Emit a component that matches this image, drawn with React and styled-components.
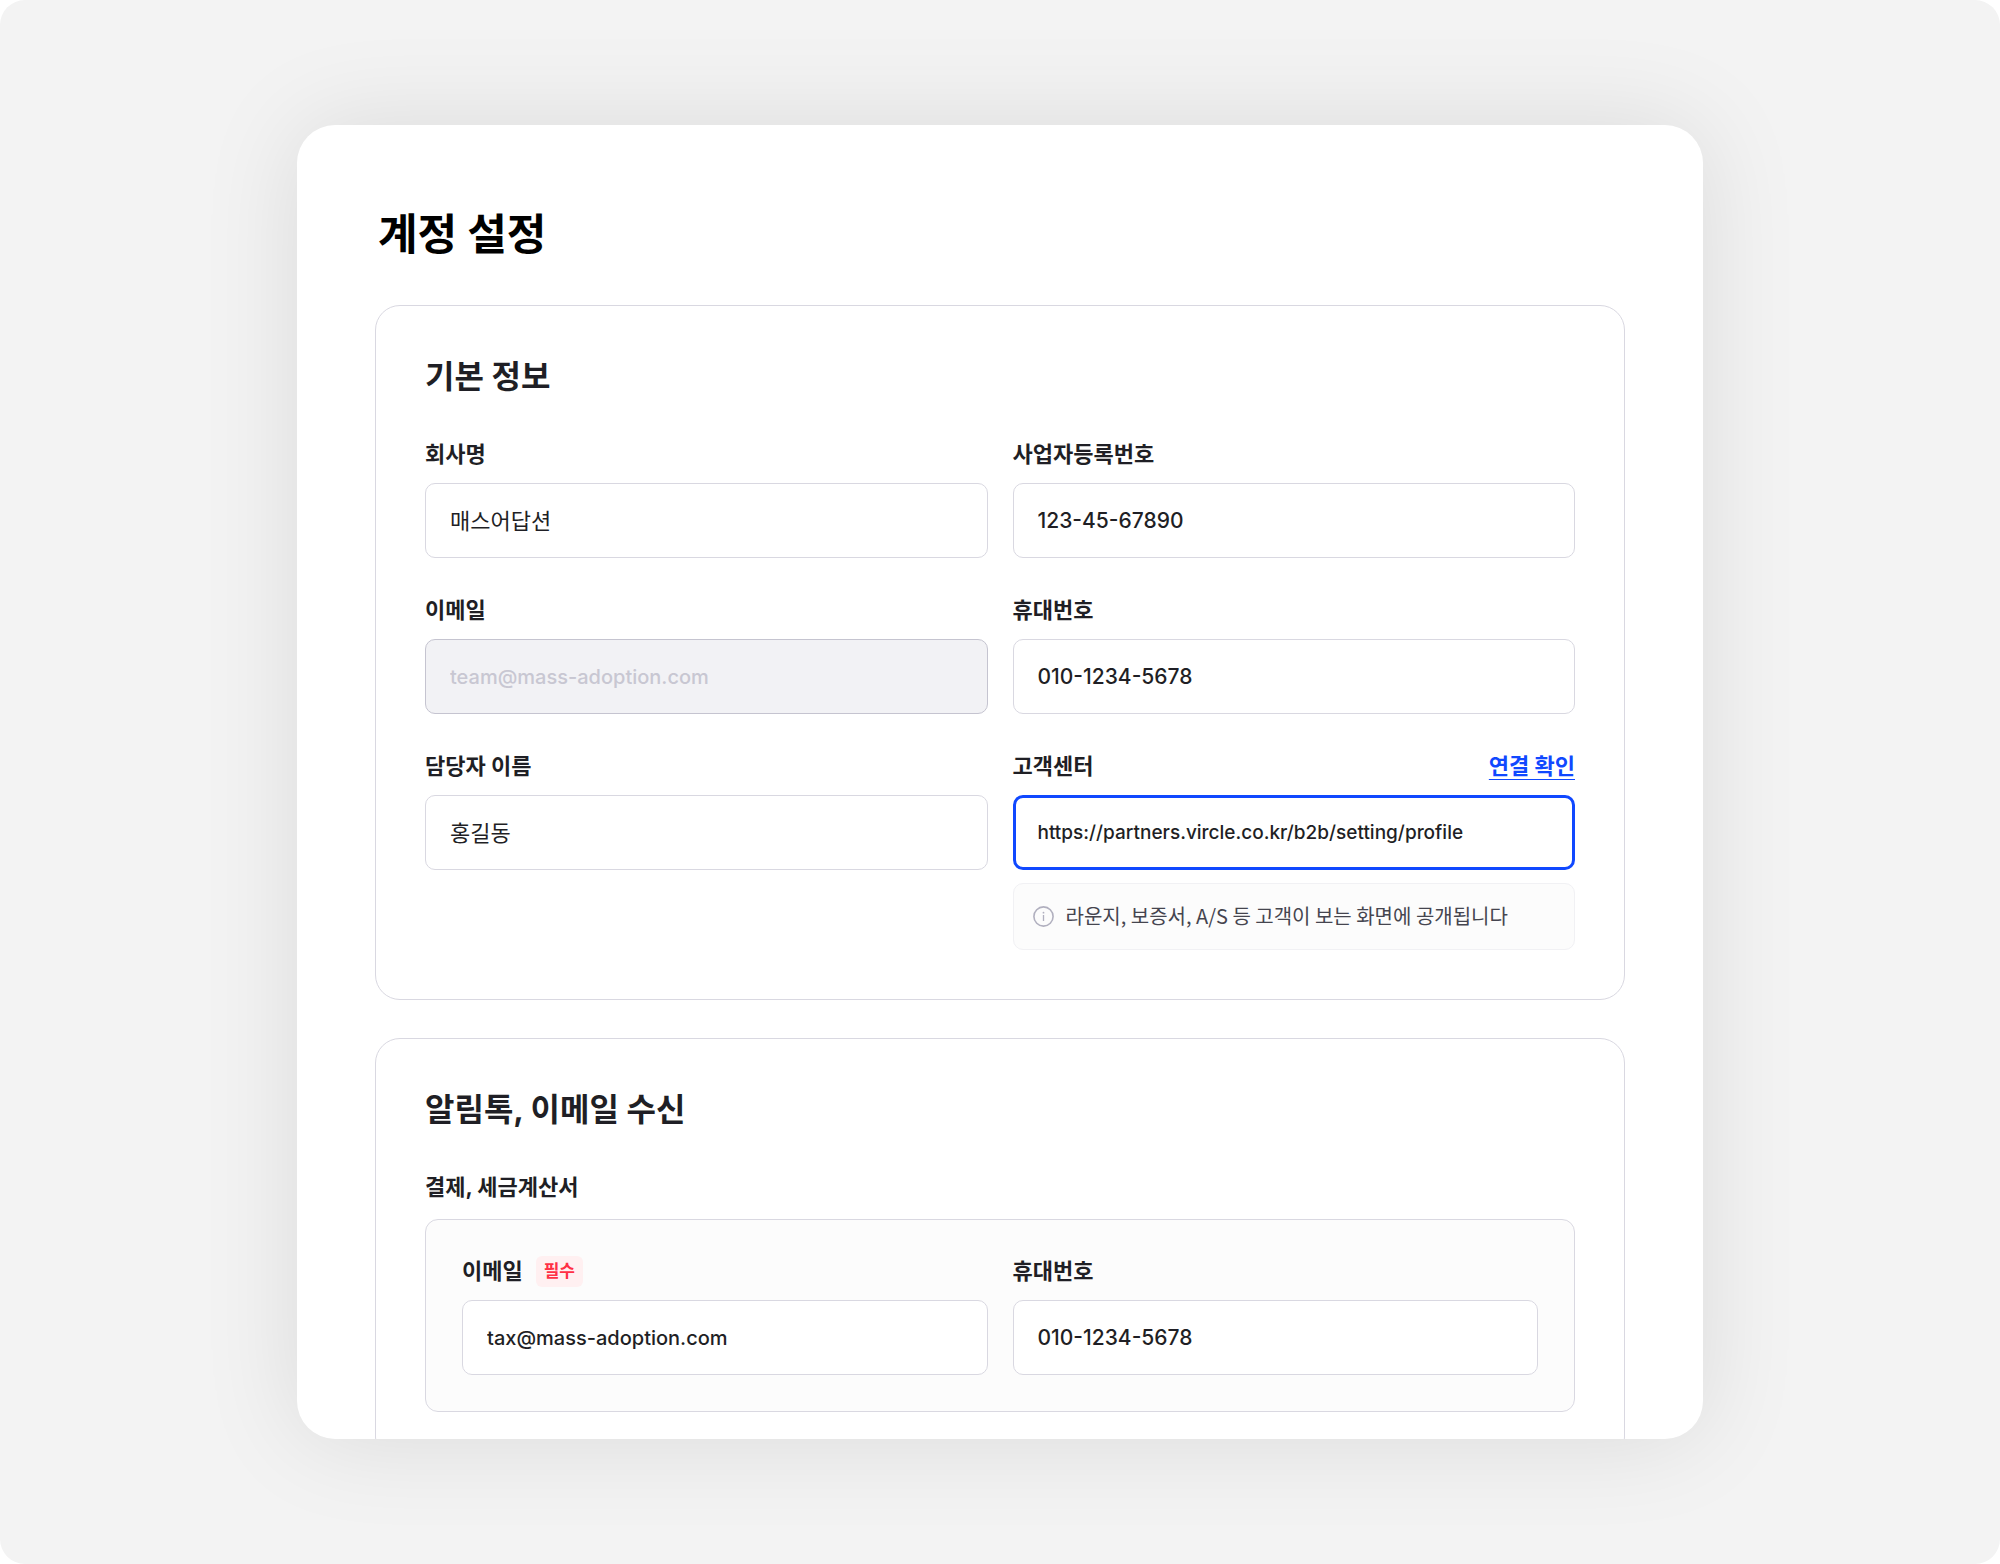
import React, { useState } from 'react';
import styled, { createGlobalStyle, css } from 'styled-components';

const GlobalStyle = createGlobalStyle`
  * {
    box-sizing: border-box;
  }
  body {
    margin: 0;
    background: #fff;
    color: #1f1f25;
    font-family: Inter, 'Noto Sans CJK KR', sans-serif;
  }
`;

const Page = styled.div`
  display: flex;
  justify-content: center;
  height: 100vh;
  padding: 125px 60px;
  border-radius: 25px;
  background: #f3f3f3;
`;

const Sheet = styled.main`
  width: 100%;
  max-width: 1406px;
  padding: 80px 78px 0;
  overflow: hidden;
  border-radius: 38px;
  background: #fff;
  box-shadow: 0 0 100px rgba(0, 0, 0, 0.1);
`;

const PageTitle = styled.h1`
  margin: 0 0 42px;
  padding-left: 3px;
  color: #000;
  font-size: 43px;
  font-weight: 700;
  line-height: 58px;
`;

const Section = styled.section`
  margin-bottom: 38px;
  padding: 47px 49px 49px;
  border: 1px solid #d9d8e1;
  border-radius: 25px;
`;

const SectionTitle = styled.h2`
  margin: 0 0 38px;
  font-size: 32px;
  font-weight: 700;
  line-height: 48px;
`;

const FieldGrid = styled.div`
  display: grid;
  grid-template-columns: 1fr 1fr;
  gap: 37px 25px;
`;

const FieldHead = styled.div`
  display: flex;
  align-items: center;
  height: 31px;
  margin-bottom: 13px;
`;

const Label = styled.label`
  font-size: 22px;
  font-weight: 700;
  line-height: 31px;
`;

const Badge = styled.span`
  margin-left: 13px;
  padding: 0 8px;
  border-radius: 6px;
  background: #fff0f1;
  color: #ff3045;
  font-size: 17px;
  font-weight: 700;
  line-height: 31px;
`;

const CheckLink = styled.a`
  margin-left: auto;
  color: #1048ff;
  font-size: 22px;
  font-weight: 700;
  line-height: 31px;
  text-decoration: underline;
  text-decoration-thickness: 1px;
  text-underline-offset: 5px;
`;

const Input = styled.input`
  display: block;
  width: 100%;
  height: 75px;
  padding: 0 24px 4px;
  border: 1px solid #d9d8e1;
  border-radius: 10px;
  outline: none;
  background: #fff;
  color: #1f1f25;
  font-family: inherit;
  font-size: 22px;

  &[inputmode] {
    padding-bottom: 0;
    font-weight: 500;
  }

  &[inputmode='numeric'] {
    font-size: 21px;
  }

  &[inputmode='email'] {
    font-size: 20px;
  }

  &[inputmode='url'] {
    font-size: 19px;
  }

  &:disabled {
    border-color: #c5c4d0;
    background: #f2f2f5;
    color: #c8c7d2;
  }

  ${props =>
    props.$active &&
    css`
      padding: 0 22px;
      border: 3px solid #1048ff;
    `}
`;

const Hint = styled.p`
  display: flex;
  align-items: center;
  gap: 12px;
  height: 67px;
  margin: 13px 0 0;
  padding: 0 19px;
  border: 1px solid #f1f1f4;
  border-radius: 10px;
  background: #fcfcfc;
  color: #45454f;
  font-family: 'Noto Sans CJK KR', sans-serif;
  font-size: 20px;
  line-height: 28px;
`;

const HintText = styled.span`
  padding-bottom: 2px;
`;

const InfoIcon = styled.svg`
  flex: none;
  width: 21px;
  height: 21px;
`;

const Group = styled.fieldset`
  min-width: 0;
  margin: 0;
  padding: 0;
  border: none;
`;

const GroupTitle = styled.legend`
  margin-bottom: 16px;
  padding: 0;
  font-size: 22px;
  font-weight: 700;
  line-height: 31px;
`;

const GroupBox = styled.div`
  padding: 36px;
  border: 1px solid #d9d8e1;
  border-radius: 13px;
  background: #fcfcfc;
`;

const Field = ({ id, label, badge, link, hint, value, ...rest }) => {
  const [text, setText] = useState(value);

  return (
    <div>
      <FieldHead>
        <Label htmlFor={id}>{label}</Label>
        {badge && <Badge>{badge}</Badge>}
        {link && <CheckLink href={text}>{link}</CheckLink>}
      </FieldHead>
      <Input
        id={id}
        value={text}
        onChange={e => setText(e.target.value)}
        {...rest}
      />
      {hint && (
        <Hint>
          <InfoIcon viewBox="0 0 21 21" fill="none" aria-hidden="true">
            <circle cx="10.5" cy="10.5" r="9.6" stroke="#b1b0bf" strokeWidth="1.6" />
            <circle cx="10.5" cy="6.7" r="0.9" fill="#b1b0bf" />
            <path d="M10.5 9v6" stroke="#b1b0bf" strokeWidth="1.3" />
          </InfoIcon>
          <HintText>{hint}</HintText>
        </Hint>
      )}
    </div>
  );
};

const App = () => (
  <>
    <GlobalStyle />
    <Page>
      <Sheet>
        <PageTitle>계정 설정</PageTitle>

        <Section>
          <SectionTitle>기본 정보</SectionTitle>
          <FieldGrid>
            <Field id="company" label="회사명" value="매스어답션" />
            <Field
              id="bizno"
              inputMode="numeric"
              label="사업자등록번호"
              value="123-45-67890"
            />
            <Field
              id="email"
              type="email"
              inputMode="email"
              label="이메일"
              value="team@mass-adoption.com"
              disabled
            />
            <Field
              id="phone"
              type="tel"
              inputMode="numeric"
              label="휴대번호"
              value="010-1234-5678"
            />
            <Field id="manager" label="담당자 이름" value="홍길동" />
            <Field
              id="support"
              type="url"
              inputMode="url"
              label="고객센터"
              link="연결 확인"
              value="https://partners.vircle.co.kr/b2b/setting/profile"
              hint="라운지, 보증서, A/S 등 고객이 보는 화면에 공개됩니다"
              $active
            />
          </FieldGrid>
        </Section>

        <Section>
          <SectionTitle>알림톡, 이메일 수신</SectionTitle>
          <Group>
            <GroupTitle>결제, 세금계산서</GroupTitle>
            <GroupBox>
              <FieldGrid>
                <Field
                  id="tax-email"
                  type="email"
                  inputMode="email"
                  label="이메일"
                  badge="필수"
                  value="tax@mass-adoption.com"
                />
                <Field
                  id="tax-phone"
                  type="tel"
                  inputMode="numeric"
                  label="휴대번호"
                  value="010-1234-5678"
                />
              </FieldGrid>
            </GroupBox>
          </Group>
        </Section>
      </Sheet>
    </Page>
  </>
);

export default App;
